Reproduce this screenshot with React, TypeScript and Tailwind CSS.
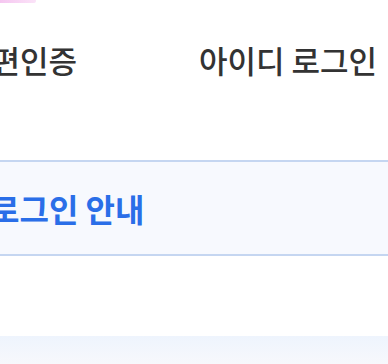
export default function App() {
  return (
    <div
      className="w-[388px] h-[364px] overflow-hidden bg-white flex flex-col"
      style={{ fontFamily: '"Noto Sans CJK KR", "Noto Sans", sans-serif' }}
    >
      <div className="h-[3px] w-[36px] bg-gradient-to-r from-[#f5c6f0] to-[#fbe3f8] rounded-br-[2px]" />
      <div className="flex items-center justify-between h-[31px] mt-[41px] pr-[11px]">
        <span className="ml-[-37px] text-[31px] leading-none font-medium text-[#333333] whitespace-nowrap">간편인증</span>
        <span className="text-[31px] leading-none font-medium text-[#333333] whitespace-nowrap">아이디 로그인</span>
      </div>
      <div className="mt-[85px] ml-[-20px] mr-[-20px] h-[96px] border-y-2 border-[#c5d6f1] bg-[#f7f9fe] flex items-center">
        <span className="ml-[10px] text-[32px] leading-none font-bold text-[#2a6ee8] whitespace-nowrap">로그인 안내</span>
      </div>
      <div className="flex-1" />
      <div className="h-[28px] bg-gradient-to-b from-[#eef4fd] to-[#f7f8fc]" />
    </div>
  );
}
